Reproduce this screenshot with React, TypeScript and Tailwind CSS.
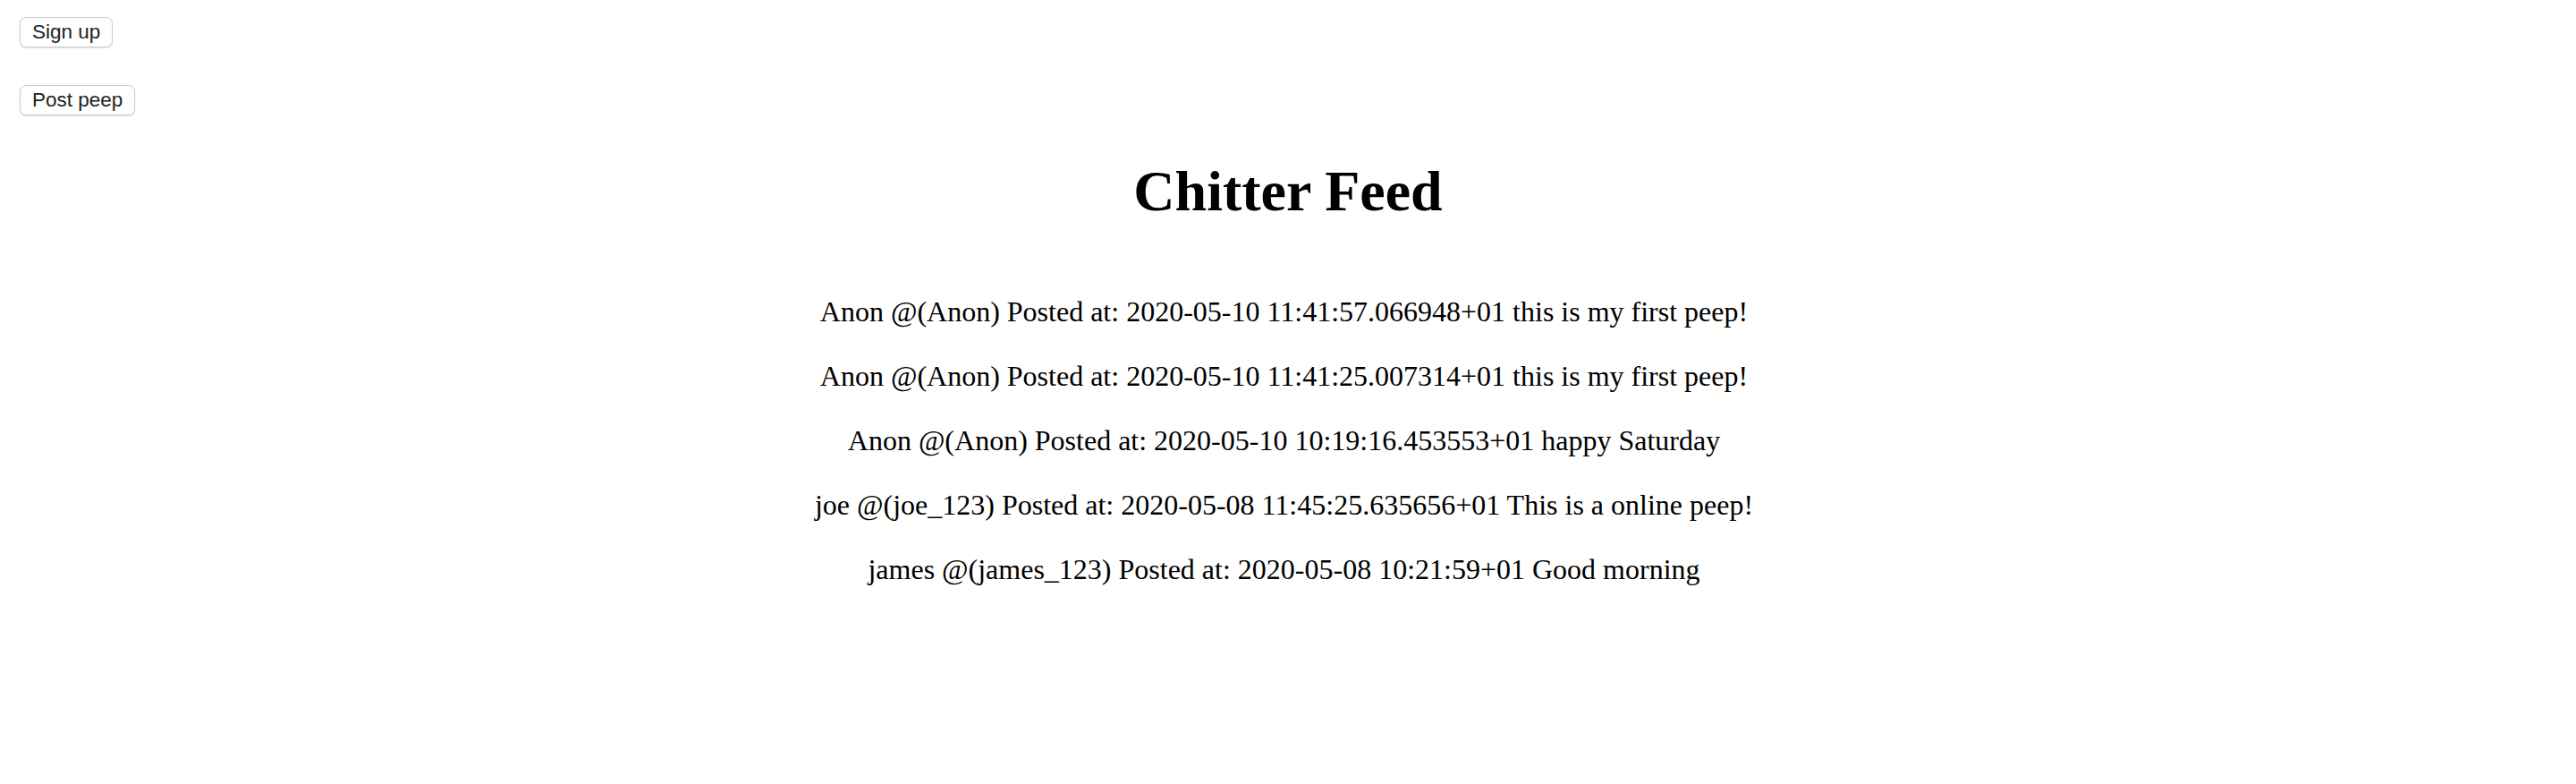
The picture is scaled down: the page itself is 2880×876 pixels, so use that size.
import React from "react";

const PEEPS = [
  { name: "Anon", handle: "Anon", at: "2020-05-10 11:41:57.066948+01", body: "this is my first peep!" },
  { name: "Anon", handle: "Anon", at: "2020-05-10 11:41:25.007314+01", body: "this is my first peep!" },
  { name: "Anon", handle: "Anon", at: "2020-05-10 10:19:16.453553+01", body: "happy Saturday" },
  { name: "joe", handle: "joe_123", at: "2020-05-08 11:45:25.635656+01", body: "This is a online peep!" },
  { name: "james", handle: "james_123", at: "2020-05-08 10:21:59+01", body: "Good morning" },
];

function Btn({ children }: { children: React.ReactNode }) {
  return (
    <button
      type="button"
      className="h-[34px] px-[13px] bg-white border border-[#cbcbcb] rounded-[7px] shadow-[0_1px_1px_rgba(0,0,0,0.12)] text-[22.5px] leading-none text-[#222] font-['Liberation_Sans',Arial,sans-serif]"
    >
      {children}
    </button>
  );
}

export default function App() {
  return (
    <div className="min-h-screen bg-white text-black font-['Liberation_Serif','Times_New_Roman',serif]">
      {/* Nav buttons */}
      <div className="pl-[22px] pt-[19px]">
        <Btn>Sign up</Btn>
        <div className="mt-[42px]">
          <Btn>Post peep</Btn>
        </div>
      </div>

      <h1 className="mt-[49px] text-center text-[64px] leading-[71px] font-bold">Chitter Feed</h1>

      {/* Feed */}
      <div className="mt-[79px] pr-[9px] flex flex-col gap-[32px] text-center text-[32px] leading-[40px]">
        {PEEPS.map((p, i) => (
          <p key={i}>
            {p.name} @({p.handle}) Posted at: {p.at} {p.body}
          </p>
        ))}
      </div>
    </div>
  );
}
